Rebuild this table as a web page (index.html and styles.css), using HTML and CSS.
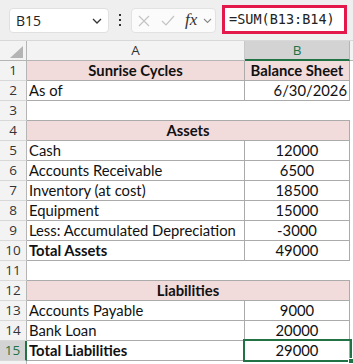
FILE: index.html
```html
<!DOCTYPE html>
<html>
<head>
<meta charset="utf-8">
<link rel="stylesheet" href="styles.css">
</head>
<body>
<div class="app">
  <div class="toolbar">
    <div class="namebox">
      <span class="nb-text">B15</span>
      <svg class="nb-chev" width="10" height="6" viewBox="0 0 10 6"><polyline points="1,1 5,5 9,1" fill="none" stroke="#333" stroke-width="1.3"/></svg>
    </div>
    <div class="dots"><i></i><i></i><i></i></div>
    <div class="fbtns">
      <svg class="ic-x" width="12" height="12" viewBox="0 0 12 12"><path d="M1 1 L11 11 M11 1 L1 11" stroke="#c4c4c4" stroke-width="1.2" fill="none"/></svg>
      <svg class="ic-check" width="14" height="11" viewBox="0 0 14 11"><polyline points="1,6 5,10 13,1" fill="none" stroke="#c4c4c4" stroke-width="1.2"/></svg>
      <span class="fx">fx</span>
      <svg class="ic-chev" width="9" height="6" viewBox="0 0 9 6"><polyline points="1,1 4.5,4.5 8,1" fill="none" stroke="#8a8a8a" stroke-width="1.1"/></svg>
    </div>
    <div class="formula">=SUM(B13:B14)</div>
  </div>
  <div class="sheet">
    <div class="corner"><span class="tri"></span></div>
    <div class="colhead">A</div>
    <div class="colhead sel">B</div>
    <div class="colhead last"></div>

    <div class="rh">1</div>
    <div class="c pink bold center">Sunrise Cycles</div>
    <div class="c pink bold center">Balance Sheet</div>
    <div class="e"></div>

    <div class="rh">2</div>
    <div class="c">As of</div>
    <div class="c right">6/30/2026</div>
    <div class="e"></div>

    <div class="rh">3</div>
    <div class="blank"></div>
    <div class="e"></div>

    <div class="rh">4</div>
    <div class="c pink bold center span2">Assets</div>
    <div class="e"></div>

    <div class="rh">5</div>
    <div class="c">Cash</div>
    <div class="c center">12000</div>
    <div class="e"></div>

    <div class="rh">6</div>
    <div class="c">Accounts Receivable</div>
    <div class="c center">6500</div>
    <div class="e"></div>

    <div class="rh">7</div>
    <div class="c">Inventory (at cost)</div>
    <div class="c center">18500</div>
    <div class="e"></div>

    <div class="rh">8</div>
    <div class="c">Equipment</div>
    <div class="c center">15000</div>
    <div class="e"></div>

    <div class="rh">9</div>
    <div class="c">Less: Accumulated Depreciation</div>
    <div class="c center">-3000</div>
    <div class="e"></div>

    <div class="rh">10</div>
    <div class="c bold">Total Assets</div>
    <div class="c center">49000</div>
    <div class="e"></div>

    <div class="rh">11</div>
    <div class="blank"></div>
    <div class="e"></div>

    <div class="rh">12</div>
    <div class="c pink bold center span2">Liabilities</div>
    <div class="e"></div>

    <div class="rh">13</div>
    <div class="c">Accounts Payable</div>
    <div class="c center">9000</div>
    <div class="e"></div>

    <div class="rh">14</div>
    <div class="c">Bank Loan</div>
    <div class="c center">20000</div>
    <div class="e"></div>

    <div class="rh selrow">15</div>
    <div class="c bold">Total Liabilities</div>
    <div class="c center active">29000<span class="selbox"></span><span class="handle"></span></div>
    <div class="e"></div>

    <div class="rh"></div>
    <div class="e"></div>
    <div class="e"></div>
    <div class="e"></div>
  </div>
</div>
</body>
</html>
```

FILE: styles.css
```css
* { box-sizing: border-box; }
html, body { margin: 0; padding: 0; background: #ffffff; }
body { width: 353px; height: 364px; overflow: hidden; }

.app { width: 353px; }

.toolbar {
  height: 41px;
  background: #efefef;
  border-bottom: 1px solid #d8d8d8;
  display: flex;
  align-items: flex-start;
  padding-left: 9px;
}
.namebox {
  margin-top: 8px;
  width: 100px;
  height: 25px;
  background: #ffffff;
  border: 1px solid #e0e0e0;
  border-radius: 4px;
  display: flex;
  align-items: center;
  justify-content: space-between;
  padding: 0 6px 0 6px;
}
.nb-text {
  font-family: "Open Sans", sans-serif;
  font-size: 14px;
  color: #222;
}
.dots {
  margin: 14px 0 0 10px;
  width: 2px;
  display: flex;
  flex-direction: column;
  gap: 3px;
}
.dots i { display: block; width: 2px; height: 2px; background: #333; }
.fbtns {
  margin: 8px 0 0 10px;
  width: 85px;
  height: 25px;
  background: #fbfbfb;
  border: 1px solid #e2e2e2;
  border-radius: 4px;
  display: flex;
  align-items: center;
  padding-left: 6px;
}
.ic-check { margin-left: 11px; }
.fx {
  margin-left: 10px;
  font-family: "Liberation Serif", serif;
  font-style: italic;
  font-size: 17px;
  color: #333;
  line-height: 1;
  margin-top: -2px;
}
.ic-chev { margin-left: 6px; }
.formula {
  margin: 5px 0 0 6px;
  width: 125px;
  height: 29px;
  background: #ffffff;
  border: 3px solid #e3194b;
  font-family: "DejaVu Sans Mono", monospace;
  font-size: 13.5px;
  color: #222;
  line-height: 23px;
  padding-left: 4px;
  white-space: nowrap;
}

.sheet {
  display: grid;
  grid-template-columns: 27px 218px 105px 1fr;
  grid-auto-rows: 20px;
  font-family: Lato, sans-serif;
  font-size: 14.8px;
  color: #111;
}
.corner {
  background: #f3f3f3;
  border-right: 1px solid #b5b5b5;
  border-bottom: 1px solid #b5b5b5;
  position: relative;
}
.tri {
  position: absolute;
  right: 3px;
  bottom: 2px;
  width: 13px;
  height: 12px;
  background: #b4b4b4;
  clip-path: polygon(100% 0, 100% 100%, 0 100%);
}
.colhead {
  background: #f3f3f3;
  border-right: 1px solid #c8c8c8;
  border-bottom: 1px solid #b5b5b5;
  text-align: center;
  font-family: "Open Sans", sans-serif;
  font-size: 13.5px;
  line-height: 19px;
  color: #333;
}
.colhead.sel {
  background: #d3d3d3;
  color: #217346;
  border-bottom: 2px solid #217346;
  border-right-color: #b5b5b5;
}
.colhead.last { border-right: none; }

.rh {
  background: #f3f3f3;
  border-right: 1px solid #b5b5b5;
  border-bottom: 1px solid #d8d8d8;
  text-align: center;
  font-family: "Open Sans", sans-serif;
  font-size: 13.5px;
  line-height: 19px;
  color: #333;
}
.rh.selrow {
  background: #d3d3d3;
  color: #217346;
  border-right: 2px solid #217346;
}

.c {
  border-right: 1px solid #ababab;
  border-bottom: 1px solid #ababab;
  line-height: 19px;
  padding: 0 2px;
  white-space: nowrap;
  overflow: hidden;
}
.pink { background: #f2dcdb; }
.bold { font-weight: 700; }
.center { text-align: center; }
.right { text-align: right; }
.span2 { grid-column: span 2; }
.blank {
  grid-column: span 2;
  border-bottom: 1px solid #ababab;
}
.e { background: #ffffff; }

.active { position: relative; overflow: visible; }
.selbox {
  position: absolute;
  left: -2px;
  top: -2px;
  right: -3px;
  bottom: -2px;
  border: 2px solid #217346;
  pointer-events: none;
}
.handle {
  position: absolute;
  right: -5px;
  bottom: -4px;
  width: 6px;
  height: 6px;
  background: #217346;
  border: 1px solid #ffffff;
}
```
